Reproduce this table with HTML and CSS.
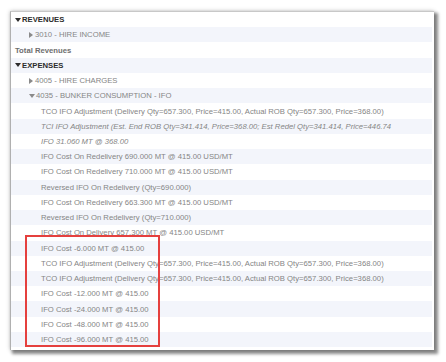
FILE: index.html
```html
<!DOCTYPE html>
<html>
<head>
<meta charset="utf-8">
<link rel="stylesheet" href="styles.css">
</head>
<body>
<div class="panel">
  <div class="rows">
    <div class="row l0 head dark"><svg class="tri" width="6" height="4" viewBox="0 0 6 4"><path d="M0 0H6L3 4Z"/></svg>REVENUES</div>
    <div class="row l1 alt"><svg class="tri" width="4" height="6" viewBox="0 0 4 6"><path d="M0 0L4 3L0 6Z"/></svg>3010 - HIRE INCOME</div>
    <div class="row l0 head total">Total Revenues</div>
    <div class="row l0 head dark alt"><svg class="tri" width="6" height="4" viewBox="0 0 6 4"><path d="M0 0H6L3 4Z"/></svg>EXPENSES</div>
    <div class="row l1"><svg class="tri" width="4" height="6" viewBox="0 0 4 6"><path d="M0 0L4 3L0 6Z"/></svg>4005 - HIRE CHARGES</div>
    <div class="row l1 alt"><svg class="tri down" width="6" height="4" viewBox="0 0 6 4"><path d="M0 0H6L3 4Z"/></svg>4035 - BUNKER CONSUMPTION - IFO</div>
    <div class="row l2">TCO IFO Adjustment (Delivery Qty=657.300, Price=415.00, Actual ROB Qty=657.300, Price=368.00)</div>
    <div class="row l2 alt it">TCI IFO Adjustment (Est. End ROB Qty=341.414, Price=368.00; Est Redel Qty=341.414, Price=446.74</div>
    <div class="row l2 it">IFO 31.060 MT @ 368.00</div>
    <div class="row l2 alt">IFO Cost On Redelivery 690.000 MT @ 415.00 USD/MT</div>
    <div class="row l2">IFO Cost On Redelivery 710.000 MT @ 415.00 USD/MT</div>
    <div class="row l2 alt">Reversed IFO On Redelivery (Qty=690.000)</div>
    <div class="row l2">IFO Cost On Redelivery 663.300 MT @ 415.00 USD/MT</div>
    <div class="row l2 alt">Reversed IFO On Redelivery (Qty=710.000)</div>
    <div class="row l2">IFO Cost On Delivery 657.300 MT @ 415.00 USD/MT</div>
    <div class="row l2 alt">IFO Cost -6.000 MT @ 415.00</div>
    <div class="row l2">TCO IFO Adjustment (Delivery Qty=657.300, Price=415.00, Actual ROB Qty=657.300, Price=368.00)</div>
    <div class="row l2 alt">TCO IFO Adjustment (Delivery Qty=657.300, Price=415.00, Actual ROB Qty=657.300, Price=368.00)</div>
    <div class="row l2">IFO Cost -12.000 MT @ 415.00</div>
    <div class="row l2 alt">IFO Cost -24.000 MT @ 415.00</div>
    <div class="row l2">IFO Cost -48.000 MT @ 415.00</div>
    <div class="row l2 alt">IFO Cost -96.000 MT @ 415.00</div>
  </div>
</div>
<div class="highlight"></div>
</body>
</html>
```
FILE: styles.css
```css
html, body {
  margin: 0;
  padding: 0;
  background: #ffffff;
}
body {
  font-family: "Liberation Sans", Arial, sans-serif;
  font-size: 7.7px;
  color: #858585;
  width: 446px;
  height: 362px;
  overflow: hidden;
}
.panel {
  margin: 11px 0 0 10px;
  width: 421px;
  height: 336px;
  border-top: 1px solid #c8c8c8;
  border-left: 1px solid #b0b0b0;
  padding: 0 2px 2px 0;
  background: #ffffff;
  box-shadow: 3px 3px 3px 1px rgba(0, 0, 0, 0.45), 0 0 4px rgba(0, 0, 0, 0.25);
}
.rows {
  display: grid;
  grid-auto-rows: 15.24px;
}
.row {
  display: flex;
  align-items: center;
  white-space: nowrap;
  overflow: hidden;
  background: #ffffff;
}
.row.alt {
  background: #f3f5fb;
}
.l0 { padding-left: 4px; }
.l1 { padding-left: 18px; }
.l2 { padding-left: 30px; }
.head { font-weight: bold; }
.dark { color: #2c2c2c; }
.total { color: #6e6e6e; }
.it { font-style: italic; }
.tri {
  fill: currentColor;
  margin-right: 1px;
  flex: none;
}
.l1 .tri { fill: #8a8a8a; margin-right: 2px; }
.l1 .tri.down { margin-right: 1px; }
.highlight {
  position: absolute;
  left: 25px;
  top: 235px;
  width: 131px;
  height: 108px;
  border: 2px solid #e5403e;
}
```
